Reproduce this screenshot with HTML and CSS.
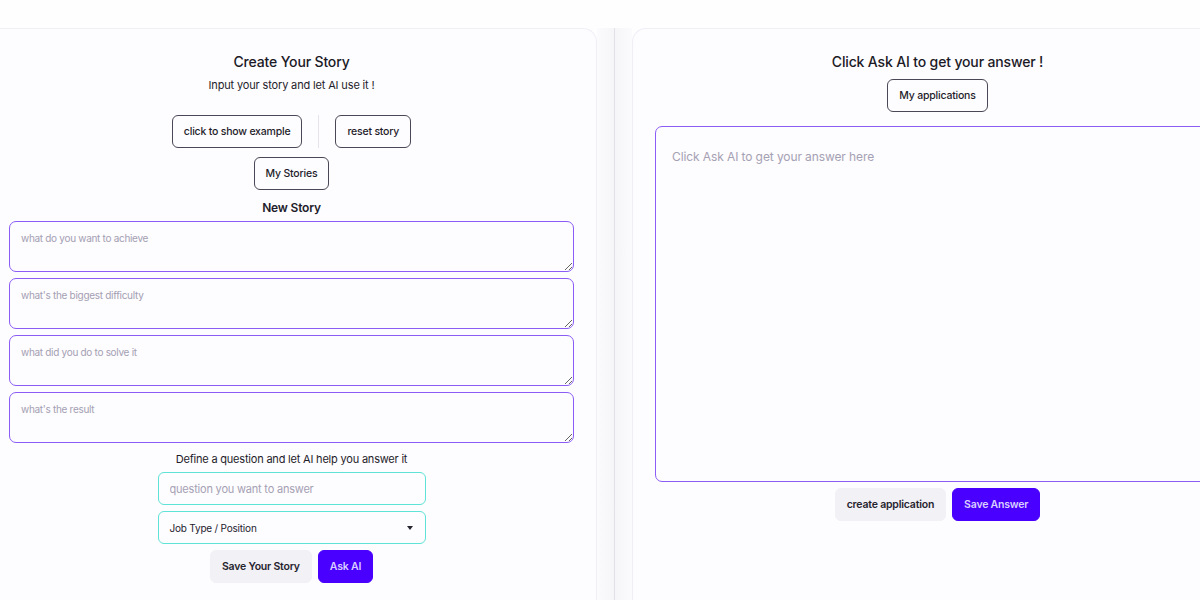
FILE: index.html
```html
<!DOCTYPE html>
<html lang="en">
<head>
<meta charset="utf-8">
<title>Create Your Story</title>
<link rel="stylesheet" href="styles.css">
</head>
<body>
<main class="layout">
  <section class="card card-left">
    <h2 class="title">Create Your Story</h2>
    <p class="subtitle">Input your story and let AI use it !</p>
    <div class="btn-row top-row">
      <button class="btn btn-outline">click to show example</button>
      <span class="vsep"></span>
      <button class="btn btn-outline">reset story</button>
    </div>
    <div class="btn-row stories-row">
      <button class="btn btn-outline">My Stories</button>
    </div>
    <h3 class="section-title">New Story</h3>
    <div class="story-fields">
      <textarea class="story-area" placeholder="what do you want to achieve"></textarea>
      <textarea class="story-area" placeholder="what's the biggest difficulty"></textarea>
      <textarea class="story-area" placeholder="what did you do to solve it"></textarea>
      <textarea class="story-area" placeholder="what's the result"></textarea>
    </div>
    <p class="question-label">Define a question and let AI help you answer it</p>
    <div class="question-fields">
      <input class="q-input" type="text" placeholder="question you want to answer">
      <div class="q-select">
        <span>Job Type / Position</span>
        <span class="caret"></span>
      </div>
    </div>
    <div class="btn-row action-row">
      <button class="btn btn-ghost">Save Your Story</button>
      <button class="btn btn-primary">Ask AI</button>
    </div>
  </section>

  <div class="divider"><span class="divider-line"></span></div>

  <section class="card card-right">
    <h2 class="title">Click Ask AI to get your answer !</h2>
    <div class="btn-row apps-row">
      <button class="btn btn-outline">My applications</button>
    </div>
    <textarea class="answer-area" placeholder="Click Ask AI to get your answer here"></textarea>
    <div class="btn-row answer-row">
      <button class="btn btn-ghost">create application</button>
      <button class="btn btn-primary">Save Answer</button>
    </div>
  </section>
</main>
</body>
</html>
```

FILE: styles.css
```css
* { box-sizing: border-box; }

html, body {
  margin: 0;
  padding: 0;
  height: 100%;
  overflow: hidden;
  background: #fefeff;
  font-family: Inter, "Noto Sans", sans-serif;
  color: #1f1d2b;
}

.layout {
  display: flex;
  align-items: stretch;
  margin-left: -14px;
  padding-top: 28px;
  width: 1270px;
  height: 100vh;
}

.card {
  width: 611px;
  flex: none;
  background: #fdfcfe;
  border: 1px solid #f1eff6;
  border-bottom: none;
  border-radius: 14px 14px 0 0;
  display: flex;
  flex-direction: column;
  align-items: center;
  padding: 0 22px;
}

.divider {
  width: 35px;
  flex: none;
  display: flex;
  justify-content: center;
  background: linear-gradient(90deg, #fbfafc, #f6f5f8 45%, #f6f5f8 55%, #fbfafc);
}

.divider-line {
  width: 1px;
  background: #e3e1e8;
}

.title {
  margin: 22px 0 0;
  font-size: 14px;
  line-height: 22px;
  font-weight: 500;
  letter-spacing: -0.15px;
  color: #1b1a26;
}

.subtitle {
  margin: 2px 0 0;
  font-size: 11px;
  line-height: 20px;
  letter-spacing: -0.15px;
  color: #1f1d2b;
}

.btn-row {
  display: flex;
  justify-content: center;
  gap: 6px;
}

.top-row { margin-top: 20px; gap: 16px; }
.stories-row { margin-top: 9px; }

.vsep {
  width: 1px;
  background: #e6e4ea;
}

.btn {
  height: 33px;
  padding: 0 11px;
  font-family: inherit;
  font-size: 10.5px;
  font-weight: 500;
  letter-spacing: -0.2px;
  border-radius: 6px;
  cursor: pointer;
}

.btn-outline {
  background: #fdfcfe;
  border: 1px solid #4a4856;
  border-bottom-width: 1.5px;
  color: #1f1d2b;
}

.btn-ghost {
  background: #f2f1f5;
  border: 1px solid #f2f1f5;
  color: #26242f;
  font-weight: 600;
  padding: 0 11px;
}

.btn-primary {
  background: #4a00ff;
  border: 1px solid #4a00ff;
  color: #d9cfff;
  font-weight: 600;
  padding: 0 11px;
}

.section-title {
  margin: 9px 0 0;
  font-size: 12px;
  line-height: 18px;
  font-weight: 600;
  letter-spacing: -0.2px;
  color: #1f1d2b;
}

.story-fields {
  align-self: stretch;
  display: flex;
  flex-direction: column;
  gap: 6px;
  margin-top: 4px;
}

.story-area, .answer-area {
  display: block;
  width: 100%;
  border: 1.5px solid #8b5cf6;
  border-radius: 7px;
  background: #fdfcfe;
  font-family: inherit;
  resize: vertical;
  outline: none;
}

.story-area {
  height: 51px;
  padding: 10px 11px;
  font-size: 10px;
  letter-spacing: -0.3px;
}

.story-area::placeholder { color: #a4a0b3; }

.question-label {
  margin: 8px 0 0;
  font-size: 11px;
  line-height: 16px;
  letter-spacing: -0.2px;
  color: #1f1d2b;
}

.question-fields {
  display: flex;
  flex-direction: column;
  gap: 6px;
  margin-top: 5px;
  width: 268px;
}

.q-input, .q-select {
  height: 33px;
  border: 1.5px solid #5ee3d6;
  border-radius: 6px;
  background: #fdfcfe;
  font-family: inherit;
}

.q-input {
  padding: 0 11px;
  font-size: 11px;
  letter-spacing: -0.2px;
  outline: none;
}

.q-input::placeholder { color: #a5a1b4; }

.q-select {
  display: flex;
  align-items: center;
  justify-content: space-between;
  padding: 0 11px;
  font-size: 10px;
  letter-spacing: -0.2px;
  color: #24222e;
}

.caret {
  width: 0;
  height: 0;
  border-left: 3.5px solid transparent;
  border-right: 3.5px solid transparent;
  border-top: 4px solid #26242f;
  margin-right: 1px;
}

.action-row { margin-top: 6px; }

.apps-row { margin-top: 6px; }

.answer-area {
  margin-top: 14px;
  height: 355.5px;
  padding: 22px 16px;
  font-size: 12px;
  letter-spacing: -0.1px;
}

.answer-area::placeholder { color: #a5a1b4; }

.answer-row { margin-top: 6px; }
```
